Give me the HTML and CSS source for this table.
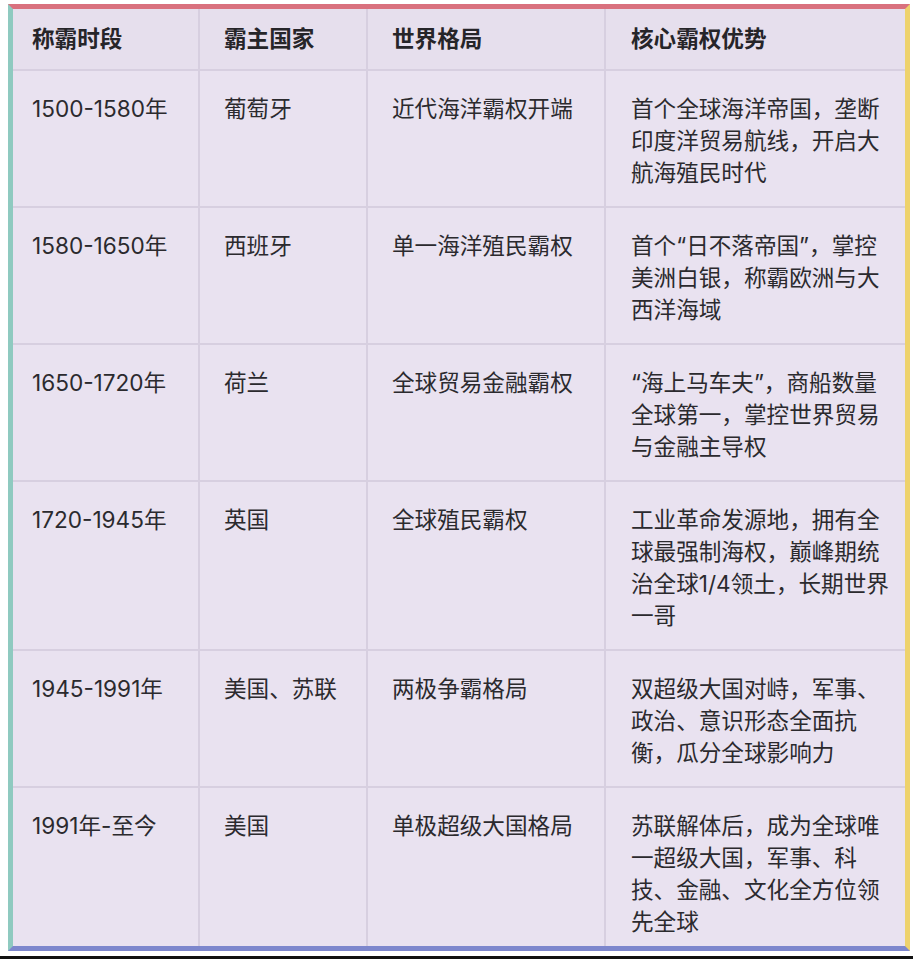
FILE: index.html
```html
<!DOCTYPE html>
<html lang="zh">
<head>
<meta charset="utf-8">
<link rel="stylesheet" href="styles.css">
</head>
<body>
<div class="frame">
  <table class="hegemony">
    <colgroup>
      <col class="c1"><col class="c2"><col class="c3"><col class="c4">
    </colgroup>
    <thead>
      <tr><th>称霸时段</th><th>霸主国家</th><th>世界格局</th><th>核心霸权优势</th></tr>
    </thead>
    <tbody>
      <tr><td>1500-1580年</td><td>葡萄牙</td><td>近代海洋霸权开端</td><td>首个全球海洋帝国，垄断<br>印度洋贸易航线，开启大<br>航海殖民时代</td></tr>
      <tr><td>1580-1650年</td><td>西班牙</td><td>单一海洋殖民霸权</td><td>首个“日不落帝国”，掌控<br>美洲白银，称霸欧洲与大<br>西洋海域</td></tr>
      <tr><td>1650-1720年</td><td>荷兰</td><td>全球贸易金融霸权</td><td>“海上马车夫”，商船数量<br>全球第一，掌控世界贸易<br>与金融主导权</td></tr>
      <tr><td>1720-1945年</td><td>英国</td><td>全球殖民霸权</td><td>工业革命发源地，拥有全<br>球最强制海权，巅峰期统<br>治全球1/4领土，长期世界<br>一哥</td></tr>
      <tr><td>1945-1991年</td><td>美国、苏联</td><td>两极争霸格局</td><td>双超级大国对峙，军事、<br>政治、意识形态全面抗<br>衡，瓜分全球影响力</td></tr>
      <tr class="last"><td>1991年-至今</td><td>美国</td><td>单极超级大国格局</td><td>苏联解体后，成为全球唯<br>一超级大国，军事、科<br>技、金融、文化全方位领<br>先全球</td></tr>
    </tbody>
  </table>
</div>
<div class="baseline"></div>
</body>
</html>
```

FILE: styles.css
```css
html, body {
  margin: 0;
  padding: 0;
  background: #ffffff;
}

body {
  font-family: "Inter", "Noto Sans CJK SC", "Noto Sans", sans-serif;
  color: #2b2a2e;
}

.frame {
  margin: 4px 3px 0 8px;
  width: 892px;
  border-top: 5px solid #d9717e;
  border-left: 5px solid #8fcac0;
  border-right: 5px solid #eed26c;
  border-bottom: 5px solid #7d87cd;
  background: #e9e2f0;
}

.hegemony {
  width: 892px;
  border-collapse: collapse;
  table-layout: fixed;
}

.c1 { width: 186px; }
.c2 { width: 168px; }
.c3 { width: 238px; }
.c4 { width: 300px; }

.hegemony th,
.hegemony td {
  text-align: left;
  vertical-align: top;
  font-size: 22.6px;
  line-height: 32px;
  padding: 22px 4px 17px 24px;
  border-right: 2px solid #d7cfe0;
  border-bottom: 2px solid #d7cfe0;
  white-space: nowrap;
}

.hegemony th {
  font-weight: 600;
  padding-top: 14px;
  padding-bottom: 14px;
  background: #e6dfed;
  color: #262529;
}

.hegemony td {
  font-weight: 400;
}

.hegemony th:first-child,
.hegemony td:first-child {
  padding-left: 19px;
}

.hegemony th:last-child,
.hegemony td:last-child {
  border-right: none;
  padding-left: 25px;
}

.hegemony tr.last td {
  border-bottom: none;
  padding-bottom: 8px;
}

.baseline {
  margin-top: 5px;
  height: 3px;
  background: #111111;
}
```
